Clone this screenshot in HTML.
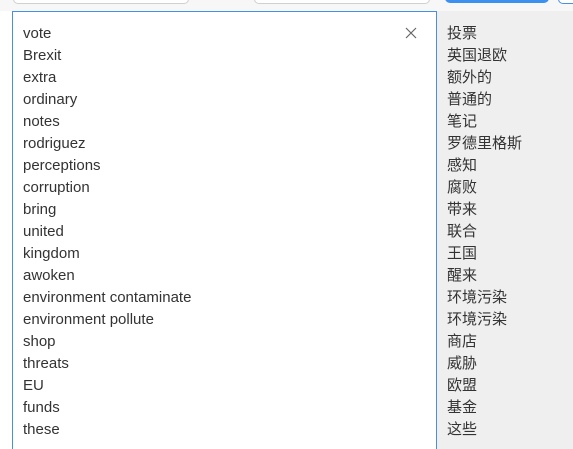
<!DOCTYPE html>
<html style="width:573px;height:449px;overflow:hidden"><head><style>
body{margin:0;width:573px;height:449px;overflow:hidden;background:#fff;font-family:"Liberation Sans","Noto Sans CJK SC",sans-serif;position:relative}
.top{position:absolute;left:0;top:0;width:573px;height:11px;background:#f7f7f7}
.inp{position:absolute;top:-10px;height:12px;border:1px solid #d0d0d0;border-radius:5px;background:#fff}
.btn{position:absolute;top:-10px;height:13px;background:#3d8ff0;border-radius:5px}
.ta{position:absolute;left:12px;top:11px;width:423px;height:438px;border:1px solid #4a90e2;border-bottom:none;background:#fff}
.right{position:absolute;left:437px;top:11px;width:136px;height:438px;background:#efefef}
.col{position:absolute;font-size:15px;line-height:22px;color:#333}
</style></head><body>
<div class="top"></div>
<div class="inp" style="left:13px;width:174px"></div>
<div class="inp" style="left:254px;width:174px"></div>
<div class="btn" style="left:445px;width:104px"></div>
<div class="inp" style="left:558px;width:30px;border-color:#4a90e2"></div>
<div class="ta"></div>
<div class="right"></div>
<svg style="position:absolute;left:405px;top:27px" width="12" height="12"><path d="M1 1L11 11M11 1L1 11" stroke="#666" stroke-width="1.2"/></svg>
<div class="col" style="left:23px;top:23px">vote<br>Brexit<br>extra<br>ordinary<br>notes<br>rodriguez<br>perceptions<br>corruption<br>bring<br>united<br>kingdom<br>awoken<br>environment contaminate<br>environment pollute<br>shop<br>threats<br>EU<br>funds<br>these</div>
<div class="col" style="left:447px;top:23px">投票<br>英国退欧<br>额外的<br>普通的<br>笔记<br>罗德里格斯<br>感知<br>腐败<br>带来<br>联合<br>王国<br>醒来<br>环境污染<br>环境污染<br>商店<br>威胁<br>欧盟<br>基金<br>这些</div>
</body></html>
